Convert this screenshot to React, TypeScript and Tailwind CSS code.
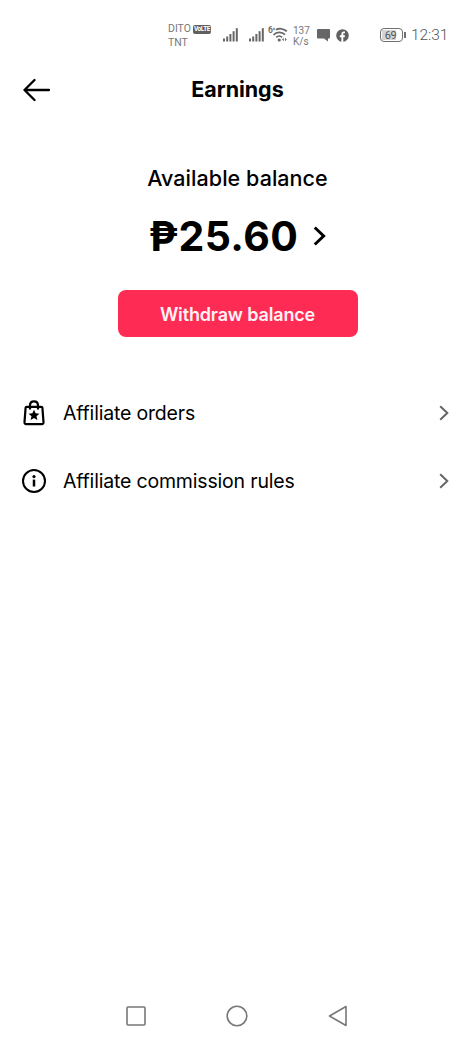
import React from 'react';

const SignalIcon = () => (
    <svg width="15" height="14" viewBox="0 0 15 14" fill="#666" className="shrink-0">
        <rect x="0" y="10.5" width="2" height="3" />
        <rect x="3.2" y="8.5" width="2" height="5" />
        <rect x="6.4" y="6" width="2" height="7.5" />
        <rect x="9.6" y="3.2" width="2" height="10.3" />
        <rect x="12.8" y="0.2" width="2" height="13.3" />
    </svg>
);

const WifiIcon = () => (
    <svg width="21" height="17" viewBox="0 0 21 17" fill="none" stroke="#666" className="shrink-0">
        <text x="0" y="7" fontSize="8.5" fontWeight="600" fill="#666" stroke="none">6</text>
        <path d="M6 1.8v2.4M4.8 3h2.4" strokeWidth="0.8" />
        <path d="M8 3.8C11 2 15.5 2.4 18.8 5.3" strokeWidth="1.8" />
        <path d="M5.5 9C8.5 5.6 14 5.6 17 8.7" strokeWidth="1.8" />
        <path d="M8.2 11.4c1.7-1.7 4.2-1.7 5.9 0" strokeWidth="1.7" />
        <circle cx="11.2" cy="14" r="1.6" fill="#666" stroke="none" />
        <path d="M15.8 11.8l-1.8 1.7 1.8 1.7zM17 11.8l1.8 1.7-1.8 1.7z" fill="#666" stroke="none" />
    </svg>
);

const MessageIcon = () => (
    <svg width="13" height="13" viewBox="0 0 13 13" fill="#666" className="shrink-0">
        <path d="M1 0h11q1 0 1 1v7.5q0 1-1 1h-1v3l-4-3H1q-1 0-1-1V1q0-1 1-1z" />
    </svg>
);

const FacebookIcon = () => (
    <svg width="13" height="13" viewBox="0 0 13 13" className="shrink-0">
        <circle cx="6.5" cy="6.5" r="6.3" fill="#606060" />
        <path d="M5.4 13V8.2H3.8V6.3h1.6V5.1c0-1.7 1-2.5 2.5-2.5.6 0 1.1.1 1.1.1v1.6h-.8c-.7 0-.9.4-.9.9v1.1H9l-.3 1.9H7.3V13z" fill="#fff" />
    </svg>
);

const Chevron = ({ className, strokeWidth = 2 }: { className: string; strokeWidth?: number }) => (
    <svg viewBox="0 0 10 16" fill="none" stroke="currentColor" className={className}>
        <path d="M1.2 1.2L8.3 8l-7.1 6.8" strokeWidth={strokeWidth} />
    </svg>
);

const BagIcon = () => (
    <svg width="24" height="26" viewBox="0 0 24 26" fill="none" stroke="#000" strokeWidth="2.2" strokeLinejoin="round">
        <path d="M4.6 6.8h14.8c.5 0 .9.4 1 .9l1.1 14.5c.1 1.3-.5 1.9-1.6 1.9H4.1c-1.1 0-1.7-.6-1.6-1.9L3.6 7.7c.1-.5.5-.9 1-.9z" />
        <path d="M8 9.6V5.4c0-2.6 1.5-4.1 4-4.1s4 1.5 4 4.1v4.2" />
        <path d="M12 9.8l1.6 3.5 3.8.4-2.9 2.5.9 3.8-3.4-2-3.4 2 .9-3.8-2.9-2.5 3.8-.4z" fill="#000" stroke="none" />
    </svg>
);

const InfoIcon = () => (
    <svg width="24" height="24" viewBox="0 0 24 24" fill="none" stroke="#000" strokeWidth="2">
        <circle cx="12" cy="12" r="11" />
        <circle cx="12" cy="7.6" r="1.6" fill="#000" stroke="none" />
        <path d="M12 10.6v6.9" strokeWidth="2.5" />
    </svg>
);

const StatusBar = () => (
    <div className="flex h-[62px] items-start pl-[168px] pt-[22px] font-[Roboto,sans-serif] text-[#777]">
        <div className="w-[54px] text-[10.5px] leading-[14px]">
            <div className="flex items-center gap-[3px]">
                <span className="w-[22px] whitespace-nowrap">DITO</span>
                <span className="flex h-[9px] w-[18px] items-center justify-center rounded-[2px] bg-[#606060] text-[6.5px] font-bold leading-none tracking-[-0.4px] text-white">VoLTE</span>
            </div>
            <div>TNT</div>
        </div>
        <div className="flex pl-px pt-[6px]">
            <SignalIcon />
            <div className="w-[11px]" />
            <SignalIcon />
        </div>
        <div className="ml-[4px] pt-[4px]">
            <WifiIcon />
        </div>
        <div className="ml-[4px] w-[24px] pt-[3px] text-[10px] leading-[11px]">
            <div>137</div>
            <div>K/s</div>
        </div>
        <div className="flex gap-[6px] pt-[7px]">
            <MessageIcon />
            <FacebookIcon />
        </div>
        <div className="ml-[31px] flex items-center gap-px pt-[6px]">
            <div className="flex h-[14px] w-[23px] rounded-[4px] border-[1.5px] border-[#707070] p-px">
                <div className="flex w-[14px] items-center justify-center bg-[#d4d4d4] pl-[3px] text-[11px] leading-none tracking-[-0.3px] text-[#555]">69</div>
            </div>
            <div className="h-[6px] w-[2px] bg-[#707070]" />
        </div>
        <div className="ml-[5px] pt-[4px] text-[15.5px] font-light leading-[19px] tracking-[-0.1px] text-[#555]">12:31</div>
    </div>
);

const Header = () => (
    <header className="grid h-[54px] grid-cols-[60px_1fr_60px] items-center">
        <button className="pl-[23px] pt-px" aria-label="Back">
            <svg width="28" height="24" viewBox="0 0 28 24" fill="none" stroke="#000" strokeWidth="2.3" strokeLinecap="round" strokeLinejoin="round">
                <path d="M26 12H1.5M11.5 2L1.5 12l10 10" />
            </svg>
        </button>
        <h1 className="pl-px text-center text-[21.5px] font-bold tracking-[-0.05px]">Earnings</h1>
    </header>
);

const MenuRow = ({ icon, label }: { icon: React.ReactNode; label: string }) => (
    <button className="flex h-[68px] w-full items-center pl-[22px] pr-[25px]">
        <span className="flex w-6 justify-center">{icon}</span>
        <span className="ml-[17px] flex-1 whitespace-nowrap pt-[2px] text-left text-[19.5px] tracking-[-0.18px]">{label}</span>
        <Chevron className="h-4 w-[10px] text-[#666]" />
    </button>
);

const NavBar = () => (
    <nav className="mt-auto flex h-[52px] items-center pl-[126px]">
        <svg width="20" height="20" viewBox="0 0 20 20" fill="none" stroke="#777" strokeWidth="1.6">
            <rect x="1" y="1" width="18" height="18" rx="1" />
        </svg>
        <svg width="22" height="22" viewBox="0 0 22 22" fill="none" stroke="#777" strokeWidth="1.6" className="ml-[80px]">
            <circle cx="11" cy="11" r="9.8" />
        </svg>
        <svg width="20" height="22" viewBox="0 0 20 22" fill="none" stroke="#777" strokeWidth="1.6" strokeLinejoin="round" className="ml-[80px]">
            <path d="M18 1.5v19L1.5 11z" />
        </svg>
    </nav>
);

export default function App() {
    return (
        <div className="flex h-[1042px] w-[474px] flex-col bg-white font-[Inter,sans-serif] text-black">
            <StatusBar />
            <Header />
            <section className="flex flex-col items-center pl-px pt-[46px]">
                <p className="text-[21.5px] font-medium leading-8 tracking-[0.05px]">Available balance</p>
                <button className="mt-[16px] flex items-center">
                    <span className="text-[41px] font-bold leading-[52px] tracking-[0.4px]">₱25.60</span>
                    <Chevron className="ml-[15px] h-[20px] w-[13px]" strokeWidth={2.4} />
                </button>
                <button className="mt-[28px] h-[47px] w-[240px] rounded-lg bg-[#fe2c55] pt-px text-[18px] font-semibold tracking-[-0.15px] text-[#fff1f4]">
                    Withdraw balance
                </button>
            </section>
            <section className="mt-[42px]">
                <MenuRow icon={<BagIcon />} label="Affiliate orders" />
                <MenuRow icon={<InfoIcon />} label="Affiliate commission rules" />
            </section>
            <NavBar />
        </div>
    );
}
